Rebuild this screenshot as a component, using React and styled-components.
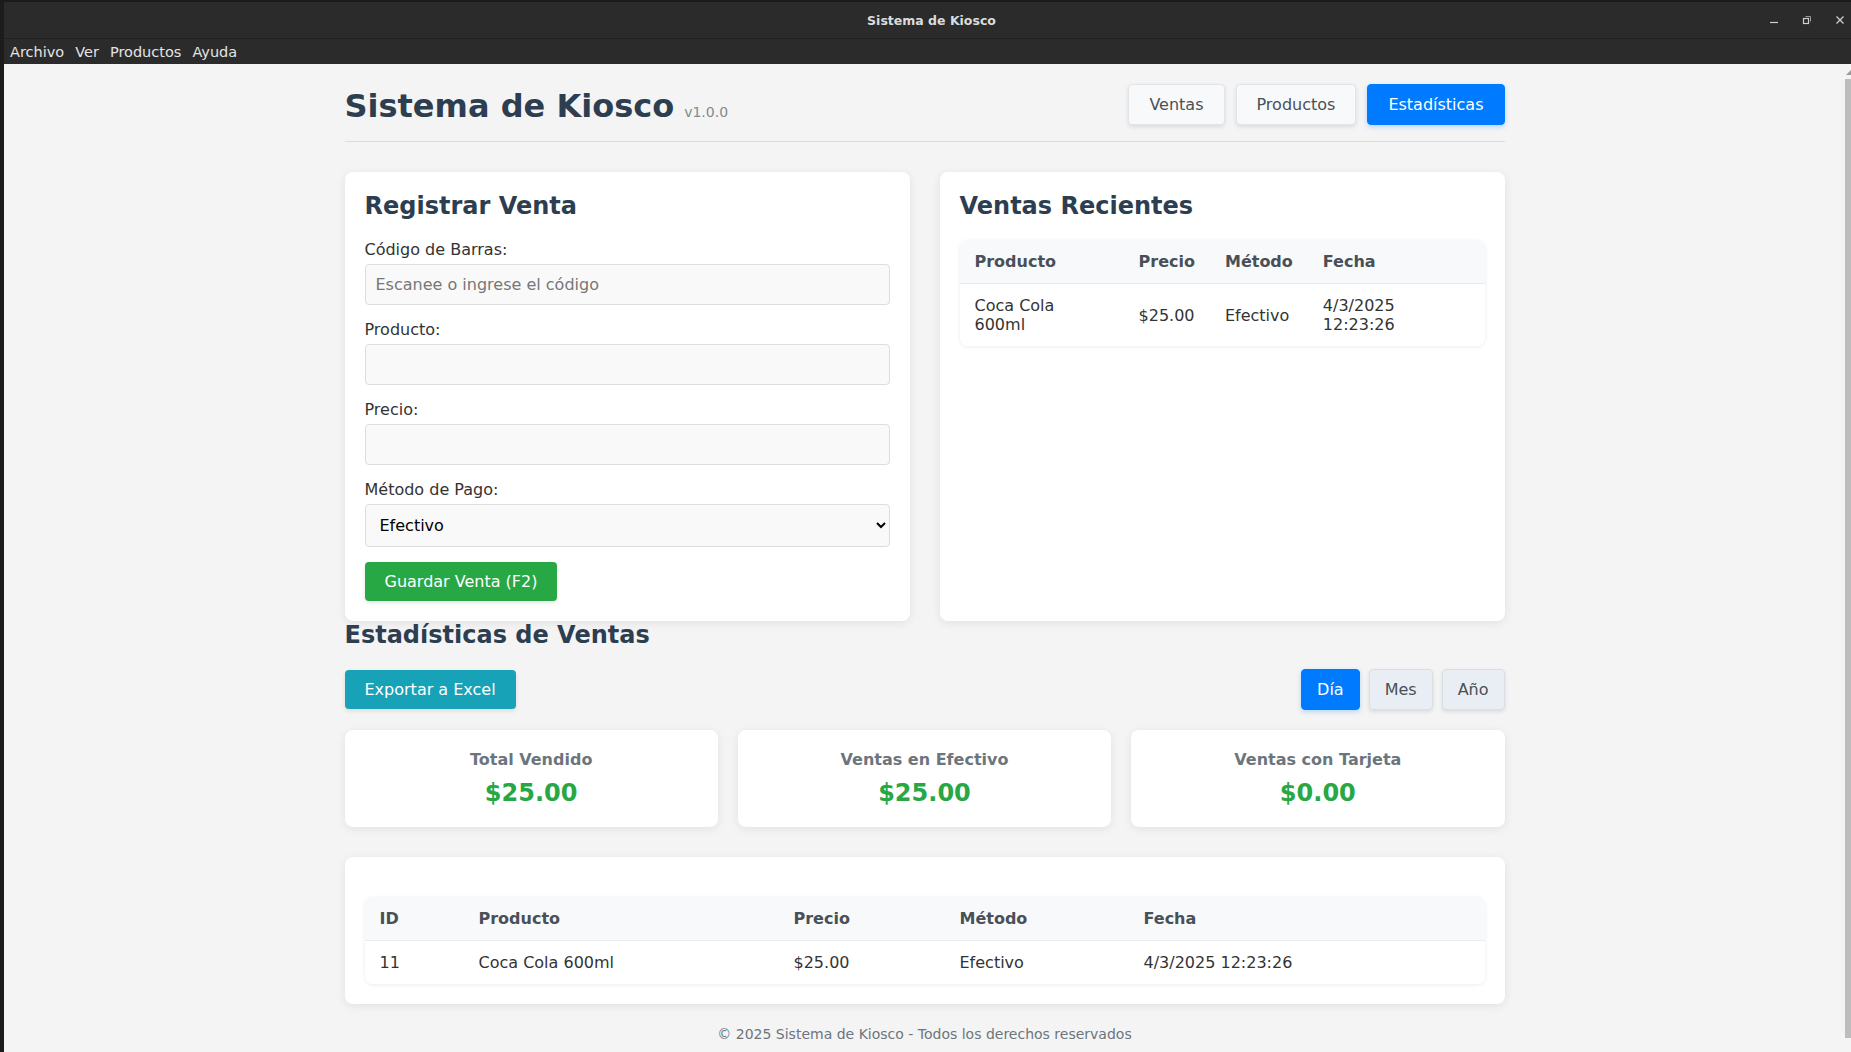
import React from "react";
import styled, { createGlobalStyle } from "styled-components";

const GlobalStyle = createGlobalStyle`
  html, body {
    margin: 0;
    padding: 0;
    height: 100%;
    overflow: hidden;
    font-family: "DejaVu Sans", "Noto Sans", sans-serif;
  }

  * {
    box-sizing: border-box;
  }
`;

const Window = styled.div`
  height: 100vh;
  display: flex;
  flex-direction: column;
  background: #2b2b2b;
  border-left: 4px solid #1c1c1c;
  border-top: 2px solid #1a1a1a;
`;

const TitleBar = styled.div`
  height: 37px;
  flex-shrink: 0;
  display: flex;
  align-items: center;
  justify-content: center;
  position: relative;
  border-bottom: 1px solid #1f1f1f;
  color: #dcdcdc;
  font-size: 12.5px;
  font-weight: bold;
  padding-left: 8px;
`;

const WindowControls = styled.div`
  position: absolute;
  right: 6px;
  top: 0;
  height: 100%;
  display: flex;
  align-items: center;
  gap: 23px;

  svg {
    display: block;
  }
`;

const MenuBar = styled.div`
  height: 25px;
  flex-shrink: 0;
  display: flex;
  align-items: center;
  padding-left: 1px;
  color: #e4e4e4;
  font-size: 14.5px;
`;

const MenuItem = styled.span`
  padding: 0 6px 0 5px;
`;

const Body = styled.div`
  flex: 1;
  min-height: 0;
  display: flex;
  background: #f4f4f4;
`;

const Viewport = styled.div`
  flex: 1;
  overflow: hidden;
`;

const ScrollTrack = styled.div`
  width: 6px;
  flex-shrink: 0;
  display: flex;
  flex-direction: column;
  padding: 6px 0 14px;
`;

const ScrollArrow = styled.div`
  height: 9px;
  display: flex;
  justify-content: flex-end;

  svg {
    display: block;
  }
`;

const ScrollThumb = styled.div`
  flex: 1;
  background: #bdbdbd;
`;

const Container = styled.div`
  max-width: 1160px;
  margin: 0 auto;
  padding: 20px 0;
`;

const Header = styled.header`
  display: flex;
  justify-content: space-between;
  align-items: flex-end;
  padding-bottom: 16px;
  border-bottom: 1px solid #ddd;
  margin-bottom: 30px;
`;

const Title = styled.h1`
  margin: 0;
  font-size: 32px;
  color: #2c3e50;

  span {
    font-size: 14px;
    font-weight: normal;
    color: #7f8c8d;
    margin-left: 10px;
  }
`;

const Nav = styled.nav`
  display: flex;
  gap: 11px;
`;

const NavButton = styled.button`
  font-family: inherit;
  font-size: 16px;
  padding: 10px 20px;
  border-radius: 4px;
  border: 1px solid ${(props) => (props.$active ? "#007bff" : "#e2e4e7")};
  background: ${(props) => (props.$active ? "#007bff" : "#f8f9fa")};
  color: ${(props) => (props.$active ? "#fff" : "#495057")};
  box-shadow: ${(props) =>
    props.$active
      ? "0 2px 5px rgba(0, 123, 255, 0.25)"
      : "0 2px 4px rgba(0, 0, 0, 0.1)"};
  cursor: pointer;
`;

const TwoColumns = styled.div`
  display: grid;
  grid-template-columns: 1fr 1fr;
  gap: 30px;
`;

const Card = styled.section`
  background: #fff;
  border-radius: 8px;
  padding: 20px;
  box-shadow: 0 2px 10px rgba(0, 0, 0, 0.08);
  text-align: ${(props) => (props.$center ? "center" : "left")};
`;

const SectionTitle = styled.h2`
  margin: 0 0 20px;
  font-size: 24px;
  color: #2c3e50;
`;

const FormGroup = styled.div`
  margin-bottom: 15px;
`;

const Label = styled.label`
  display: block;
  margin-bottom: 5px;
  font-size: 16px;
  color: #333;
`;

const Input = styled.input`
  width: 100%;
  padding: 10px;
  font-family: inherit;
  font-size: 16px;
  border: 1px solid #ddd;
  border-radius: 4px;
  background: #f9f9f9;
  color: #333;

  &::placeholder {
    color: #777;
  }
`;

const Select = styled.select`
  width: 100%;
  padding: 10px;
  font-family: inherit;
  font-size: 16px;
  border: 1px solid #ddd;
  border-radius: 4px;
  background: #f9f9f9;
  color: #000;
`;

const ActionButton = styled.button`
  font-family: inherit;
  font-size: 16px;
  padding: 10px 20px;
  border: none;
  border-radius: 4px;
  color: #fff;
  background: ${(props) => props.$color || "#28a745"};
  box-shadow: 0 2px 4px rgba(0, 0, 0, 0.1);
  cursor: pointer;
`;

const Table = styled.table`
  width: 100%;
  margin-top: 20px;
  border-collapse: collapse;
  border-radius: 8px;
  overflow: hidden;
  box-shadow: 0 1px 4px rgba(0, 0, 0, 0.08);
  font-size: 16px;

  th,
  td {
    padding: 12px 15px;
    text-align: left;
  }

  th {
    background: #f8f9fa;
    color: #495057;
    font-weight: bold;
    border-bottom: 1px solid #e9ecef;
  }

  td {
    color: #333;
    background: #fff;
  }
`;

const Col = styled.col`
  width: ${(props) => props.$width || "auto"};
`;

const Toolbar = styled.div`
  display: flex;
  justify-content: space-between;
  align-items: center;
  margin-bottom: 20px;
`;

const PeriodGroup = styled.div`
  display: flex;
  gap: 9px;
`;

const PeriodButton = styled.button`
  font-family: inherit;
  font-size: 16px;
  padding: 10px 15px;
  border-radius: 4px;
  border: 1px solid ${(props) => (props.$active ? "#007bff" : "#d9dee4")};
  background: ${(props) => (props.$active ? "#007bff" : "#e9eef4")};
  color: ${(props) => (props.$active ? "#fff" : "#495057")};
  box-shadow: ${(props) =>
    props.$active
      ? "0 2px 5px rgba(0, 123, 255, 0.25)"
      : "0 2px 4px rgba(0, 0, 0, 0.1)"};
  cursor: pointer;
`;

const StatsGrid = styled.div`
  display: grid;
  grid-template-columns: repeat(3, 1fr);
  gap: 20px;
  margin-bottom: 30px;
`;

const StatLabel = styled.h3`
  margin: 0 0 10px;
  font-size: 16px;
  color: #6c757d;
`;

const StatValue = styled.div`
  font-size: 24px;
  font-weight: bold;
  color: #28a745;
`;

const Footer = styled.footer`
  margin-top: 22px;
  padding-bottom: 20px;
  text-align: center;
  font-size: 14px;
  color: #6c757d;
`;

const recent = [
  { product: "Coca Cola 600ml", price: "$25.00", method: "Efectivo", date: "4/3/2025 12:23:26" },
];

const stats = [
  { label: "Total Vendido", value: "$25.00" },
  { label: "Ventas en Efectivo", value: "$25.00" },
  { label: "Ventas con Tarjeta", value: "$0.00" },
];

const history = [
  { id: 11, product: "Coca Cola 600ml", price: "$25.00", method: "Efectivo", date: "4/3/2025 12:23:26" },
];

export default function App() {
  return (
    <>
      <GlobalStyle />
      <Window>
        <TitleBar>
          Sistema de Kiosco
          <WindowControls>
            <svg width="10" height="10" viewBox="0 0 10 10">
              <path d="M1 7.5h8" stroke="#cfcfcf" strokeWidth="1.2" />
            </svg>
            <svg width="10" height="10" viewBox="0 0 10 10">
              <rect x="1.5" y="3.5" width="5" height="5" fill="none" stroke="#cfcfcf" strokeWidth="1.2" />
              <path d="M3.5 1.5h5v5" fill="none" stroke="#9a9a9a" strokeWidth="1" />
            </svg>
            <svg width="10" height="10" viewBox="0 0 10 10">
              <path d="M1.5 1.5l7 7M8.5 1.5l-7 7" stroke="#cfcfcf" strokeWidth="1.3" />
            </svg>
          </WindowControls>
        </TitleBar>
        <MenuBar>
          <MenuItem>Archivo</MenuItem>
          <MenuItem>Ver</MenuItem>
          <MenuItem>Productos</MenuItem>
          <MenuItem>Ayuda</MenuItem>
        </MenuBar>
        <Body>
          <Viewport>
            <Container>
              <Header>
                <Title>
                  Sistema de Kiosco<span>v1.0.0</span>
                </Title>
                <Nav>
                  <NavButton>Ventas</NavButton>
                  <NavButton>Productos</NavButton>
                  <NavButton $active>Estadísticas</NavButton>
                </Nav>
              </Header>

              <TwoColumns>
                <Card>
                  <SectionTitle>Registrar Venta</SectionTitle>
                  <FormGroup>
                    <Label htmlFor="barcode">Código de Barras:</Label>
                    <Input id="barcode" type="text" placeholder="Escanee o ingrese el código" />
                  </FormGroup>
                  <FormGroup>
                    <Label htmlFor="product">Producto:</Label>
                    <Input id="product" type="text" readOnly />
                  </FormGroup>
                  <FormGroup>
                    <Label htmlFor="price">Precio:</Label>
                    <Input id="price" type="text" readOnly />
                  </FormGroup>
                  <FormGroup>
                    <Label htmlFor="method">Método de Pago:</Label>
                    <Select id="method" defaultValue="efectivo">
                      <option value="efectivo">Efectivo</option>
                      <option value="tarjeta">Tarjeta</option>
                    </Select>
                  </FormGroup>
                  <ActionButton>Guardar Venta (F2)</ActionButton>
                </Card>

                <Card>
                  <SectionTitle>Ventas Recientes</SectionTitle>
                  <Table>
                    <thead>
                      <tr>
                        <th>Producto</th>
                        <th>Precio</th>
                        <th>Método</th>
                        <th>Fecha</th>
                      </tr>
                    </thead>
                    <tbody>
                      {recent.map((r, i) => (
                        <tr key={i}>
                          <td>{r.product}</td>
                          <td>{r.price}</td>
                          <td>{r.method}</td>
                          <td>{r.date}</td>
                        </tr>
                      ))}
                    </tbody>
                  </Table>
                </Card>
              </TwoColumns>

              <SectionTitle>Estadísticas de Ventas</SectionTitle>
              <Toolbar>
                <ActionButton $color="#17a2b8">Exportar a Excel</ActionButton>
                <PeriodGroup>
                  <PeriodButton $active>Día</PeriodButton>
                  <PeriodButton>Mes</PeriodButton>
                  <PeriodButton>Año</PeriodButton>
                </PeriodGroup>
              </Toolbar>

              <StatsGrid>
                {stats.map((s) => (
                  <Card $center key={s.label}>
                    <StatLabel>{s.label}</StatLabel>
                    <StatValue>{s.value}</StatValue>
                  </Card>
                ))}
              </StatsGrid>

              <Card>
                <Table>
                  <colgroup>
                    <Col $width="99px" />
                    <Col $width="315px" />
                    <Col $width="166px" />
                    <Col $width="184px" />
                    <Col />
                  </colgroup>
                  <thead>
                    <tr>
                      <th>ID</th>
                      <th>Producto</th>
                      <th>Precio</th>
                      <th>Método</th>
                      <th>Fecha</th>
                    </tr>
                  </thead>
                  <tbody>
                    {history.map((h) => (
                      <tr key={h.id}>
                        <td>{h.id}</td>
                        <td>{h.product}</td>
                        <td>{h.price}</td>
                        <td>{h.method}</td>
                        <td>{h.date}</td>
                      </tr>
                    ))}
                  </tbody>
                </Table>
              </Card>

              <Footer>© 2025 Sistema de Kiosco - Todos los derechos reservados</Footer>
            </Container>
          </Viewport>
          <ScrollTrack>
            <ScrollArrow>
              <svg width="5" height="5" viewBox="0 0 5 5">
                <path d="M5 0v5H0z" fill="#9a9a9a" />
              </svg>
            </ScrollArrow>
            <ScrollThumb />
          </ScrollTrack>
        </Body>
      </Window>
    </>
  );
}
